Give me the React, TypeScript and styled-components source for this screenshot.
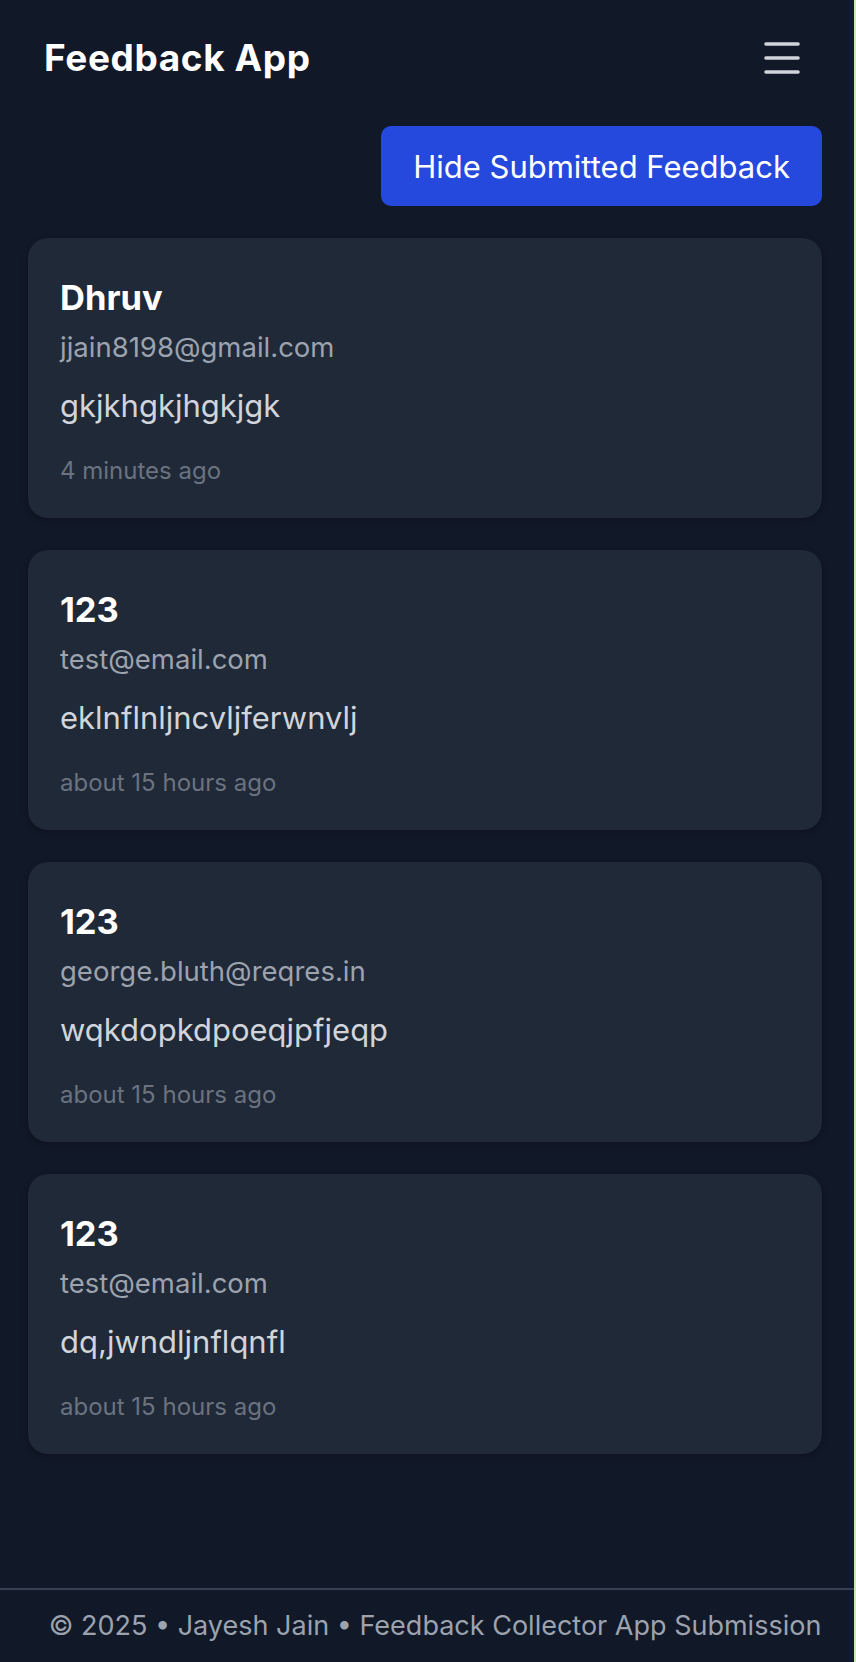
import styled, { createGlobalStyle } from 'styled-components';
import { Menu } from 'lucide-react';

const GlobalStyle = createGlobalStyle`
  * {
    box-sizing: border-box;
  }
  body {
    margin: 0;
    background: #111827;
    font-family: Inter, "Noto Sans", "Liberation Sans", sans-serif;
  }
`;

const Shell = styled.div`
  min-height: 100vh;
  display: flex;
  flex-direction: column;
  background: #111827;
  border-right: 2px solid #c4ecb4;
`;

const Header = styled.header`
  height: 116px;
  display: flex;
  align-items: center;
  justify-content: space-between;
  padding: 0 48px 0 44px;
`;

const Logo = styled.h1`
  margin: 0;
  font-size: 37px;
  line-height: 44px;
  font-weight: 700;
  color: #ffffff;
  letter-spacing: 0.6px;
`;

const MenuButton = styled.button`
  display: flex;
  padding: 0;
  border: none;
  background: none;
  color: #d1d5db;
  cursor: pointer;
`;

const Main = styled.main`
  flex: 1;
  display: flex;
  flex-direction: column;
  gap: 32px;
  padding: 10px 32px 40px 28px;
`;

const Toolbar = styled.div`
  display: flex;
  justify-content: flex-end;
`;

const ToggleButton = styled.button`
  height: 80px;
  padding: 0 32px;
  border: none;
  border-radius: 10px;
  background: #2548dd;
  color: #ffffff;
  font-family: inherit;
  font-size: 31px;
  font-weight: 400;
  cursor: pointer;
`;

const List = styled.div`
  display: flex;
  flex-direction: column;
  gap: 32px;
`;

const Card = styled.article`
  background: #1f2937;
  border-radius: 20px;
  padding: 32px 32px 31px;
  box-shadow: 0 2px 6px rgba(0, 0, 0, 0.25);
`;

const Name = styled.h2`
  margin: 0;
  font-size: 34.5px;
  line-height: 56px;
  font-weight: 700;
  color: #ffffff;
`;

const Email = styled.p`
  margin: 5px 0 0;
  font-size: 27.5px;
  line-height: 32px;
  color: #9ca3af;
`;

const Message = styled.p`
  margin: 17px 0 0;
  font-size: 31px;
  line-height: 52px;
  color: #d1d5db;
`;

const Time = styled.p`
  margin: 23px 0 0;
  font-size: 24px;
  line-height: 32px;
  color: #6b7280;
`;

const Footer = styled.footer`
  border-top: 2px solid #374151;
  padding: 16px 0 16px 16px;
  text-align: center;
  font-size: 27px;
  line-height: 40px;
  color: #9ca3af;
`;

const feedback = [
  { name: 'Dhruv', email: 'jjain8198@gmail.com', message: 'gkjkhgkjhgkjgk', time: '4 minutes ago' },
  { name: '123', email: 'test@email.com', message: 'eklnflnljncvljferwnvlj', time: 'about 15 hours ago' },
  { name: '123', email: 'george.bluth@reqres.in', message: 'wqkdopkdpoeqjpfjeqp', time: 'about 15 hours ago' },
  { name: '123', email: 'test@email.com', message: 'dq,jwndljnflqnfl', time: 'about 15 hours ago' },
];

function App() {
  return (
    <>
      <GlobalStyle />
      <Shell>
        <Header>
          <Logo>Feedback App</Logo>
          <MenuButton aria-label="Open menu">
            <Menu size={48} strokeWidth={1.8} />
          </MenuButton>
        </Header>
        <Main>
          <Toolbar>
            <ToggleButton>Hide Submitted Feedback</ToggleButton>
          </Toolbar>
          <List>
            {feedback.map((item, i) => (
              <Card key={i}>
                <Name>{item.name}</Name>
                <Email>{item.email}</Email>
                <Message>{item.message}</Message>
                <Time>{item.time}</Time>
              </Card>
            ))}
          </List>
        </Main>
        <Footer>© 2025 • Jayesh Jain • Feedback Collector App Submission</Footer>
      </Shell>
    </>
  );
}

export default App;
